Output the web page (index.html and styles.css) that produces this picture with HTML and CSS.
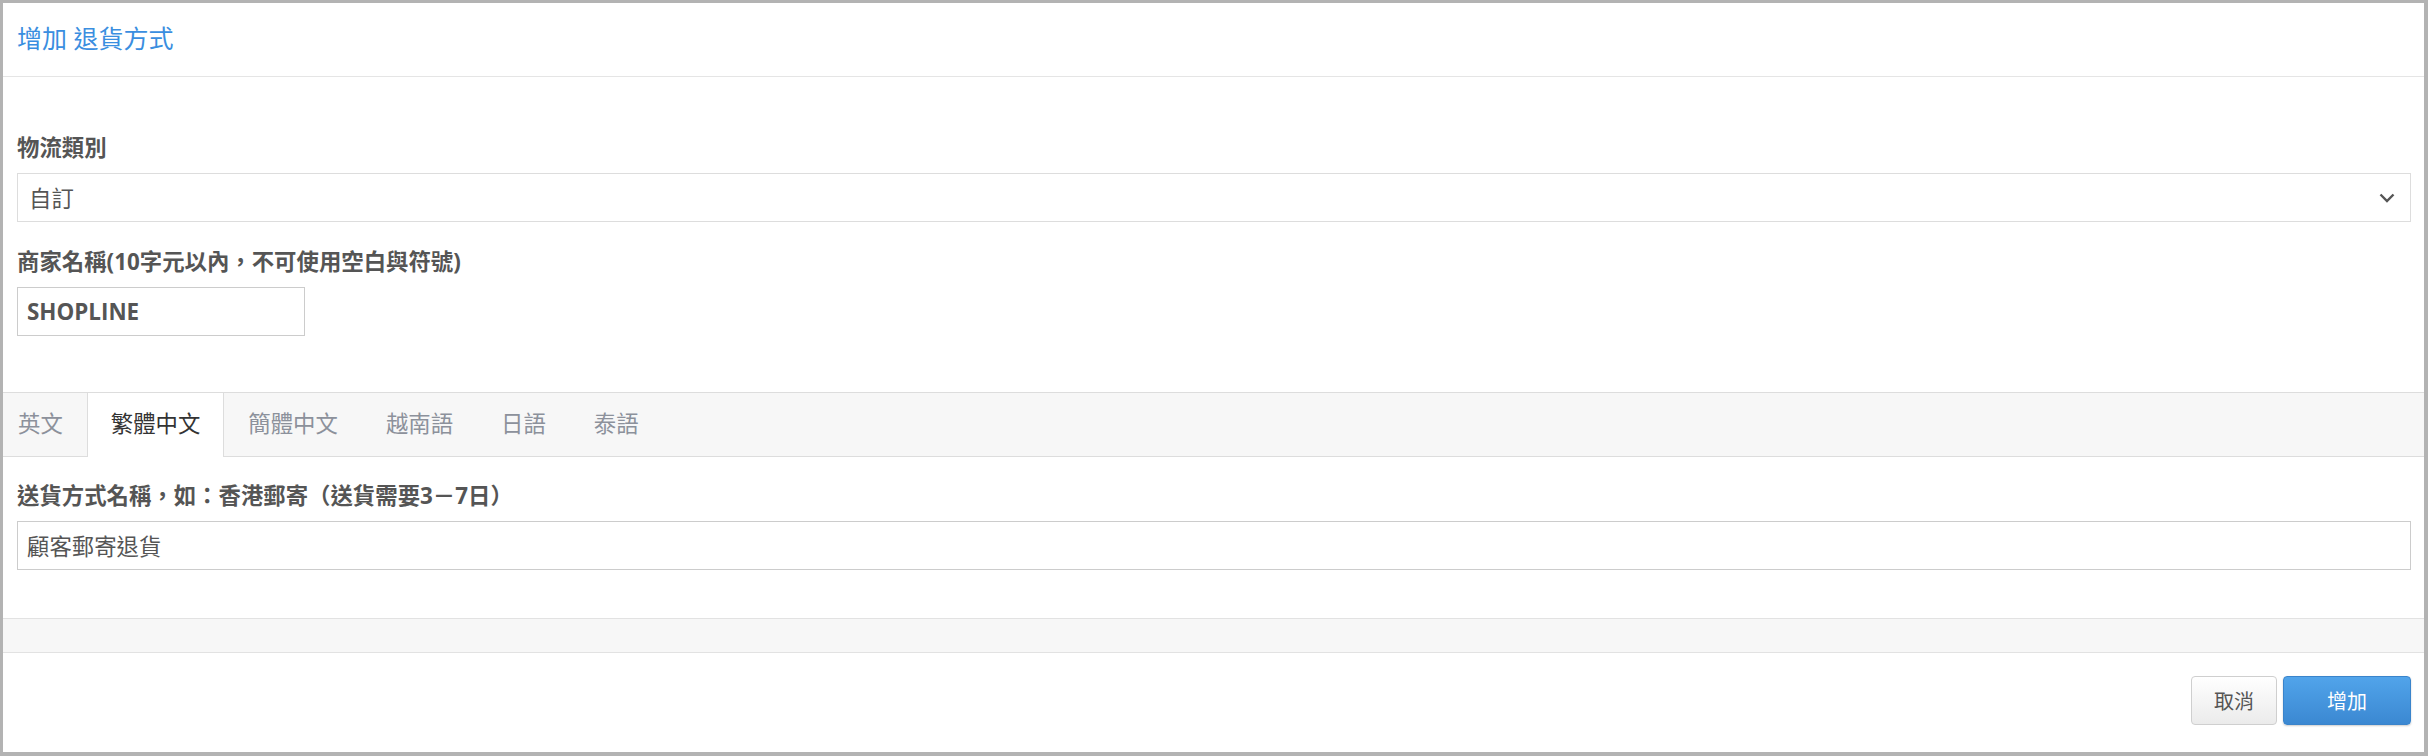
FILE: index.html
```html
<!DOCTYPE html>
<html lang="zh-Hant">
<head>
<meta charset="UTF-8">
<meta name="viewport" content="width=device-width, initial-scale=1.0">
<title>增加 退貨方式</title>
<link rel="stylesheet" href="styles.css">
</head>
<body>
<div class="modal">
    <div class="modal-header">
        <h4 class="modal-title">增加 退貨方式</h4>
    </div>

    <div class="modal-body">
        <div class="form-group">
            <label>物流類別</label>
            <div class="select-box">
                <span>自訂</span>
                <svg class="chevron" width="16" height="10" viewBox="0 0 16 10">
                    <path d="M1.5 1.5 L8 8 L14.5 1.5" fill="none" stroke="#555" stroke-width="2.4"/>
                </svg>
            </div>
        </div>
        <div class="form-group">
            <label>商家名稱(10字元以內，不可使用空白與符號)</label>
            <div class="text-input short bold">SHOPLINE</div>
        </div>
    </div>

    <ul class="lang-tabs">
        <li class="first">英文</li>
        <li class="active">繁體中文</li>
        <li>簡體中文</li>
        <li>越南語</li>
        <li>日語</li>
        <li>泰語</li>
    </ul>

    <div class="tab-pane">
        <label>送貨方式名稱，如：香港郵寄（送貨需要3－7日）</label>
        <div class="text-input">顧客郵寄退貨</div>
    </div>

    <div class="divider-band"></div>

    <div class="modal-footer">
        <button class="btn btn-default">取消</button>
        <button class="btn btn-primary">增加</button>
    </div>
</div>
</body>
</html>
```

FILE: styles.css
```css
* {
    box-sizing: border-box;
}
body {
    margin: 0;
    padding: 0;
    background-color: #b3b3b3;
    font-family: "Open Sans", "Noto Sans CJK TC", sans-serif;
    font-size: 22.4px;
    color: #555;
}
.modal {
    width: 2428px;
    height: 756px;
    background-color: #fff;
    border: 3px solid #b3b3b3;
    border-right-width: 4px;
    border-bottom-width: 4px;
    display: flex;
    flex-direction: column;
}
.modal-header {
    height: 74px;
    border-bottom: 1px solid #e5e5e5;
    display: flex;
    align-items: center;
    padding: 0 14px 2px;
}
.modal-title {
    margin: 0;
    font-size: 25px;
    font-weight: normal;
    color: #3a8ee0;
    line-height: 1;
}
.modal-body {
    padding: 55px 13px 56px 14px;
}
.form-group {
    margin-bottom: 24px;
}
.form-group:last-child {
    margin-bottom: 0;
}
label {
    display: block;
    font-weight: bold;
    line-height: 32px;
    margin-bottom: 9px;
    color: #555;
}
.select-box {
    height: 49px;
    border: 1px solid #ddd;
    display: flex;
    align-items: center;
    justify-content: space-between;
    padding: 0 15px 0 11px;
    color: #555;
}
.select-box .chevron {
    display: block;
}
.text-input {
    height: 49px;
    border: 1px solid #ccc;
    padding: 0 9px;
    display: flex;
    align-items: center;
    color: #555;
}
.text-input.short {
    width: 288px;
}
.text-input.bold {
    font-weight: bold;
}
.lang-tabs {
    list-style-type: none;
    margin: 0;
    padding: 0;
    display: flex;
    background-color: #f7f7f7;
    border-top: 1px solid #ddd;
    border-bottom: 1px solid #ddd;
}
.lang-tabs li {
    height: 63px;
    line-height: 62px;
    padding: 0 23px;
    border-left: 1px solid transparent;
    border-right: 1px solid transparent;
    margin-bottom: -1px;
    color: #8c919b;
    cursor: pointer;
}
.lang-tabs li.first {
    padding-left: 14px;
}
.lang-tabs li.active {
    height: 64px;
    background-color: #fff;
    border-left-color: #ddd;
    border-right-color: #ddd;
    color: #333;
}
.tab-pane {
    padding: 23px 13px 48px 14px;
}
.divider-band {
    height: 35px;
    background-color: #f7f7f7;
    border-top: 1px solid #e2e2e2;
    border-bottom: 1px solid #e2e2e2;
}
.modal-footer {
    flex: 1;
    display: flex;
    justify-content: flex-end;
    align-items: flex-start;
    gap: 6px;
    padding: 23px 13px 0 0;
}
.btn {
    height: 49px;
    font-family: "Open Sans", "Noto Sans CJK TC", sans-serif;
    font-size: 20px;
    border-radius: 4px;
    cursor: pointer;
    padding: 0 22px;
}
.btn-default {
    width: 86px;
    color: #555;
    background: linear-gradient(#ffffff, #ebebeb);
    border: 1px solid #cfcfcf;
}
.btn-primary {
    width: 128px;
    color: #fff;
    background: linear-gradient(#51a4ea, #3b88d2);
    border: 1px solid #3a84cb;
    box-shadow: 0 1px 2px rgba(0, 0, 0, 0.2);
}
```
